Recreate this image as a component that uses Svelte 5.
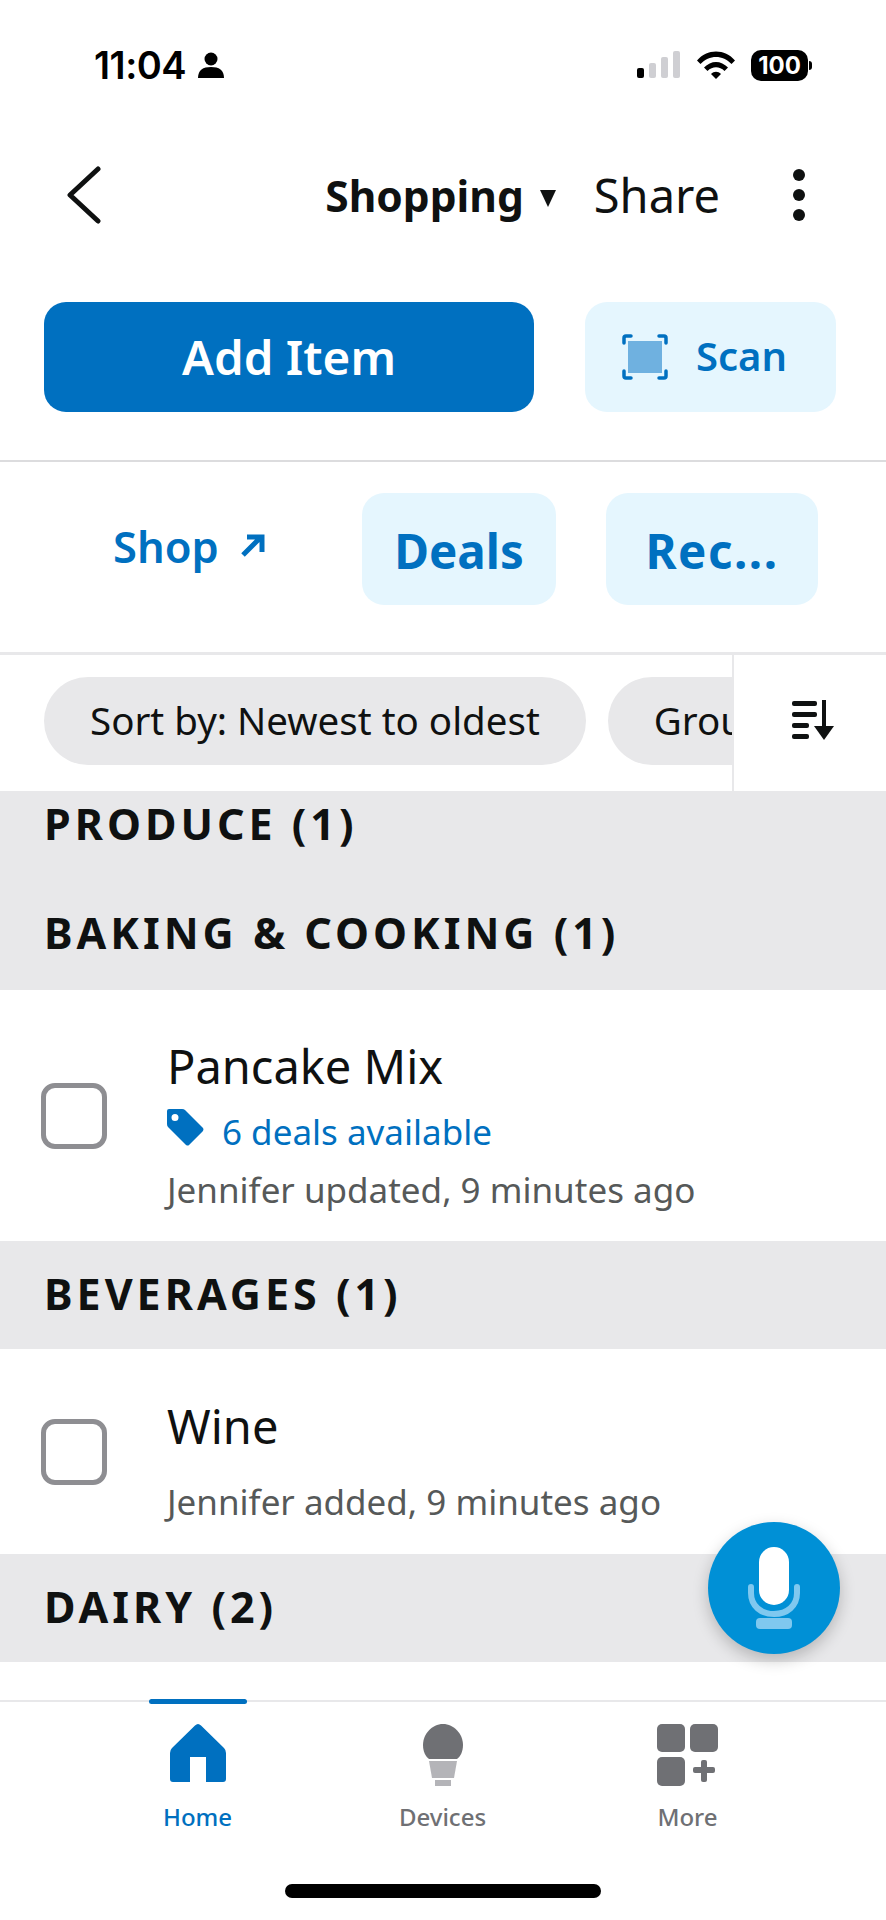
<script>
	const tabs = [
		{ label: 'Home', active: true },
		{ label: 'Devices', active: false },
		{ label: 'More', active: false }
	];
</script>

<div class="page">
	<div class="status">
		<div class="clock">
			<span>11:04</span>
			<svg width="26" height="26" viewBox="0 0 26 26"><circle cx="13" cy="7" r="6.5" fill="#000" /><path d="M0 26c0-8 5-11 13-11s13 3 13 11z" fill="#000" /></svg>
		</div>
		<div class="indicators">
			<svg width="44" height="28" viewBox="0 0 44 28">
				<rect x="0" y="17" width="7" height="10" rx="2" fill="#000" />
				<rect x="12" y="12" width="7" height="15" rx="2" fill="#cfcfd3" />
				<rect x="24" y="6" width="7" height="21" rx="2" fill="#cfcfd3" />
				<rect x="36" y="0" width="7" height="27" rx="2" fill="#cfcfd3" />
			</svg>
			<svg width="38" height="28" viewBox="0 0 38 28">
				<path d="M0 9.5C10-2.5 28-2.500 38 9.500l-3.500 3.500C26 3.500 12 3.500 3.500 13z" fill="#000" />
				<path d="M7 16.500c7-7.500 17-7.500 24 0l-3.500 3.500c-5-5-12-5-17 0z" fill="#000" />
				<path d="M14 23c3-3 7-3 10 0l-5 5z" fill="#000" />
			</svg>
			<div class="battery"><span>100</span></div>
		</div>
	</div>

	<div class="nav">
		<svg class="back" width="36" height="58" viewBox="0 0 36 58"><path d="M32 3L4 29l28 26" fill="none" stroke="#0f1111" stroke-width="5" stroke-linecap="round" stroke-linejoin="round" /></svg>
		<div class="nav-right">
			<span class="list-name">Shopping</span>
			<svg class="caret" width="16" height="17" viewBox="0 0 16 17"><path d="M0 0h16L8 17z" fill="#0f1111" /></svg>
			<span class="share">Share</span>
			<div class="dots"><i></i><i></i><i></i></div>
		</div>
	</div>

	<div class="actions">
		<div class="add">Add Item</div>
		<div class="scan">
			<svg width="46" height="46" viewBox="0 0 46 46">
				<rect x="6" y="7" width="34" height="32" fill="#6fb1e0" />
				<g fill="none" stroke="#0070c0" stroke-width="3.500" stroke-linecap="round">
					<path d="M2 9V4q0-2 2-2h5M37 2h5q2 0 2 2v5M44 37v5q0 2-2 2h-5M9 44H4q-2 0-2-2v-5" />
				</g>
			</svg>
			<span>Scan</span>
		</div>
	</div>

	<div class="tabs">
		<div class="shop">
			<span>Shop</span>
			<svg width="25" height="25" viewBox="0 0 25 25"><path d="M3 22L21 4M7 4h15v15" fill="none" stroke="#0070c0" stroke-width="5" /></svg>
		</div>
		<div class="tab deals">Deals</div>
		<div class="tab rec">Rec...</div>
	</div>

	<div class="filters">
		<div class="pills">
			<div class="pill">Sort by: Newest to oldest</div>
			<div class="pill">Group by: Category</div>
		</div>
		<div class="sort">
			<svg width="44" height="40" viewBox="0 0 44 40">
				<g fill="#0f1111">
					<rect x="0" y="1" width="25" height="5" rx="2" />
					<rect x="0" y="12" width="25" height="5" rx="2" />
					<rect x="0" y="23" width="17" height="5" rx="2" />
					<rect x="0" y="34" width="17" height="5" rx="2" />
					<rect x="30" y="0" width="4" height="30" />
					<path d="M22 26h20L32 40z" />
				</g>
			</svg>
		</div>
	</div>

	<div class="list">
		<div class="section produce">PRODUCE (1)</div>
		<div class="section baking">BAKING &amp; COOKING (1)</div>
		<div class="item pancake">
			<div class="check"></div>
			<div class="body">
				<div class="title">Pancake Mix</div>
				<div class="deal">
					<svg width="37" height="37" viewBox="0 0 37 37"><path fill-rule="evenodd" d="M2 0h13q2 0 3 1l18 18q1 1 0 3L22 36q-1 1-3 0L1 18q-1-1-1-3V2q0-2 2-2zm6 5a3.500 3.500 0 1 0 0 7a3.500 3.500 0 1 0 0-7z" fill="#0070c0" /></svg>
					<span>6 deals available</span>
				</div>
				<div class="meta">Jennifer updated, 9 minutes ago</div>
			</div>
		</div>
		<div class="section">BEVERAGES (1)</div>
		<div class="item wine">
			<div class="check"></div>
			<div class="body">
				<div class="title">Wine</div>
				<div class="meta">Jennifer added, 9 minutes ago</div>
			</div>
		</div>
		<div class="section">DAIRY (2)</div>
	</div>

	<div class="mic">
		<svg width="52" height="82" viewBox="0 0 52 82">
			<rect x="11" y="0" width="30" height="58" rx="15" fill="#fff" />
			<path d="M3 40v6c0 13 10 21 23 21s23-8 23-21v-6" fill="none" stroke="#7fc8ef" stroke-width="6" stroke-linecap="round" />
			<rect x="8" y="71" width="36" height="11" rx="4" fill="#7fc8ef" />
		</svg>
	</div>

	<div class="bottom">
		{#each tabs as tab}
			<div class="bottom-tab" class:active={tab.active}>
				{#if tab.active}<div class="bar"></div>{/if}
				<div class="icon">
					{#if tab.label === 'Home'}
						<svg width="56" height="58" viewBox="0 0 56 58"><path d="M25 1.500q3-3 6 0L54 24q2 2 2 5v26q0 3-3 3H36V33H20v25H3q-3 0-3-3V29q0-3 2-5z" fill="#0070c0" /></svg>
					{:else if tab.label === 'Devices'}
						<svg width="40" height="62" viewBox="0 0 40 62">
							<path d="M20 0c11 0 20 10 20 21 0 7-3 12-6 14H6c-3-2-6-7-6-14C0 10 9 0 20 0z" fill="#6f7074" />
							<path d="M6 37h28l-3 17H9z" fill="#b4b4b8" />
							<rect x="12" y="56" width="16" height="6" fill="#b4b4b8" />
						</svg>
					{:else}
						<svg width="62" height="62" viewBox="0 0 62 62">
							<g fill="#6f7074">
								<rect x="0" y="0" width="28" height="28" rx="5" />
								<rect x="33" y="0" width="28" height="28" rx="5" />
								<rect x="0" y="33" width="28" height="29" rx="5" />
								<rect x="36" y="43" width="22" height="6" rx="2" />
								<rect x="44" y="36" width="6" height="22" rx="2" />
							</g>
						</svg>
					{/if}
				</div>
				<div class="label">{tab.label}</div>
			</div>
		{/each}
	</div>

	<div class="home-line"></div>
</div>

<style>
	:global(body) {
		margin: 0;
		background: #fff;
	}

	.page {
		position: relative;
		width: 886px;
		height: 1920px;
		overflow: hidden;
		background: #fff;
		color: #0f1111;
		font-family: 'Noto Sans', 'Open Sans', sans-serif;
	}

	.status {
		height: 130px;
		display: flex;
		justify-content: space-between;
		align-items: center;
		padding: 0 78px 0 94px;
		box-sizing: border-box;
	}

	.clock {
		display: flex;
		align-items: center;
		gap: 12px;
		font-family: Inter, sans-serif;
		font-size: 38px;
		font-weight: 600;
		color: #000;
		letter-spacing: -0.5px;
	}

	.indicators {
		display: flex;
		align-items: center;
		gap: 16px;
	}

	.battery {
		position: relative;
		width: 57px;
		height: 31px;
		border-radius: 10px;
		background: #000;
		color: #fff;
		font-family: Inter, sans-serif;
		font-size: 24px;
		font-weight: 700;
		line-height: 31px;
		text-align: center;
	}

	.battery::after {
		content: '';
		position: absolute;
		right: -4px;
		top: 11px;
		width: 3px;
		height: 9px;
		border-radius: 0 3px 3px 0;
		background: #000;
	}

	.nav {
		height: 130px;
		display: flex;
		align-items: center;
		justify-content: space-between;
		padding: 0 81px 0 66px;
	}

	.nav-right {
		display: flex;
		align-items: center;
	}

	.list-name {
		font-size: 42.500px;
		font-weight: 700;
	}

	.caret {
		margin: 6px 38px 0 16px;
	}

	.share {
		font-size: 47px;
	}

	.dots {
		display: flex;
		flex-direction: column;
		gap: 8px;
		margin-left: 73px;
	}

	.dots i {
		display: block;
		width: 12px;
		height: 12px;
		border-radius: 50%;
		background: #0f1111;
	}

	.actions {
		display: flex;
		gap: 51px;
		padding: 42px 50px 48px 44px;
		border-bottom: 2px solid #dcdcde;
	}

	.add {
		flex: 0 0 490px;
		height: 110px;
		border-radius: 22px;
		background: #0070c0;
		color: #fff;
		font-size: 47.500px;
		font-weight: 600;
		line-height: 110px;
		text-align: center;
	}

	.scan {
		flex: 1;
		height: 110px;
		border-radius: 22px;
		background: #e5f6fe;
		color: #0070c0;
		display: flex;
		align-items: center;
		gap: 28px;
		padding-left: 37px;
		font-size: 40px;
		font-weight: 600;
		line-height: 52px;
	}

	.scan span {
		margin-top: -2px;
	}

	.tabs {
		display: flex;
		align-items: center;
		padding: 31px 0 47px 113px;
		border-bottom: 3px solid #e8e8ea;
		color: #0070c0;
	}

	.shop {
		display: flex;
		align-items: center;
		gap: 21px;
		width: 249px;
		font-size: 43.500px;
		font-weight: 600;
		margin-top: -7px;
	}

	.tab {
		height: 112px;
		border-radius: 22px;
		background: #e5f6fe;
		font-size: 47.500px;
		font-weight: 700;
		line-height: 116px;
		text-align: center;
	}

	.deals {
		width: 194px;
	}

	.rec {
		width: 212px;
		margin-left: 50px;
		letter-spacing: 1.500px;
	}

	.filters {
		height: 136px;
		display: flex;
	}

	.pills {
		flex: 0 0 734px;
		display: flex;
		gap: 22px;
		padding: 22px 0 0 44px;
		box-sizing: border-box;
		overflow: hidden;
		border-right: 2px solid #e8e8ea;
	}

	.pill {
		flex: none;
		height: 88px;
		padding: 0 46px;
		border-radius: 44px;
		background: #e8e8ea;
		font-size: 38.500px;
		line-height: 86px;
		white-space: nowrap;
	}

	.sort {
		flex: 1;
		display: flex;
		align-items: center;
		justify-content: center;
		padding-left: 8px;
		padding-bottom: 6px;
	}

	.section {
		height: 108px;
		padding-left: 44px;
		background: #e8e8ea;
		font-size: 43px;
		font-weight: 700;
		letter-spacing: 4px;
		line-height: 105px;
	}

	.produce {
		height: 90px;
		line-height: 66px;
	}

	.baking {
		height: 109px;
		line-height: 103px;
	}

	.item {
		display: flex;
		align-items: center;
		background: #fff;
		padding-left: 41px;
	}

	.pancake {
		height: 251px;
	}

	.wine {
		height: 205px;
	}

	.check {
		flex: none;
		width: 56px;
		height: 56px;
		border: 5px solid #8e8e92;
		border-radius: 14px;
		margin-right: 60px;
	}

	.body {
		padding-top: 20px;
	}

	.title {
		font-size: 47px;
		line-height: 60px;
	}

	.deal {
		display: flex;
		align-items: center;
		gap: 18px;
		height: 50px;
		margin-top: 10px;
		color: #0070c0;
		font-size: 35px;
	}

	.deal svg {
		margin-top: -8px;
	}

	.meta {
		margin-top: 9px;
		color: #565959;
		font-size: 35px;
		line-height: 50px;
	}

	.wine .meta {
		margin-top: 21px;
	}

	.mic {
		position: absolute;
		left: 708px;
		top: 1522px;
		width: 132px;
		height: 132px;
		border-radius: 50%;
		background: #0090d6;
		box-shadow: 0 6px 16px rgba(0, 0, 0, 0.22);
		display: flex;
		align-items: center;
		justify-content: center;
	}

	.bottom {
		display: grid;
		grid-template-columns: repeat(3, 245px);
		margin-top: 38px;
		padding-left: 75px;
		border-top: 2px solid #e8e8ea;
	}

	.bottom-tab {
		position: relative;
		display: flex;
		flex-direction: column;
		align-items: center;
		color: #6f7074;
	}

	.bottom-tab.active {
		color: #0070c0;
	}

	.bar {
		position: absolute;
		top: -3px;
		width: 98px;
		height: 5px;
		border-radius: 3px;
		background: #0070c0;
	}

	.icon {
		height: 62px;
		margin-top: 22px;
	}

	.label {
		margin-top: 13px;
		font-size: 24px;
		font-weight: 500;
		line-height: 36px;
	}

	.home-line {
		position: absolute;
		left: 285px;
		top: 1884px;
		width: 316px;
		height: 14px;
		border-radius: 7px;
		background: #000;
	}
</style>
